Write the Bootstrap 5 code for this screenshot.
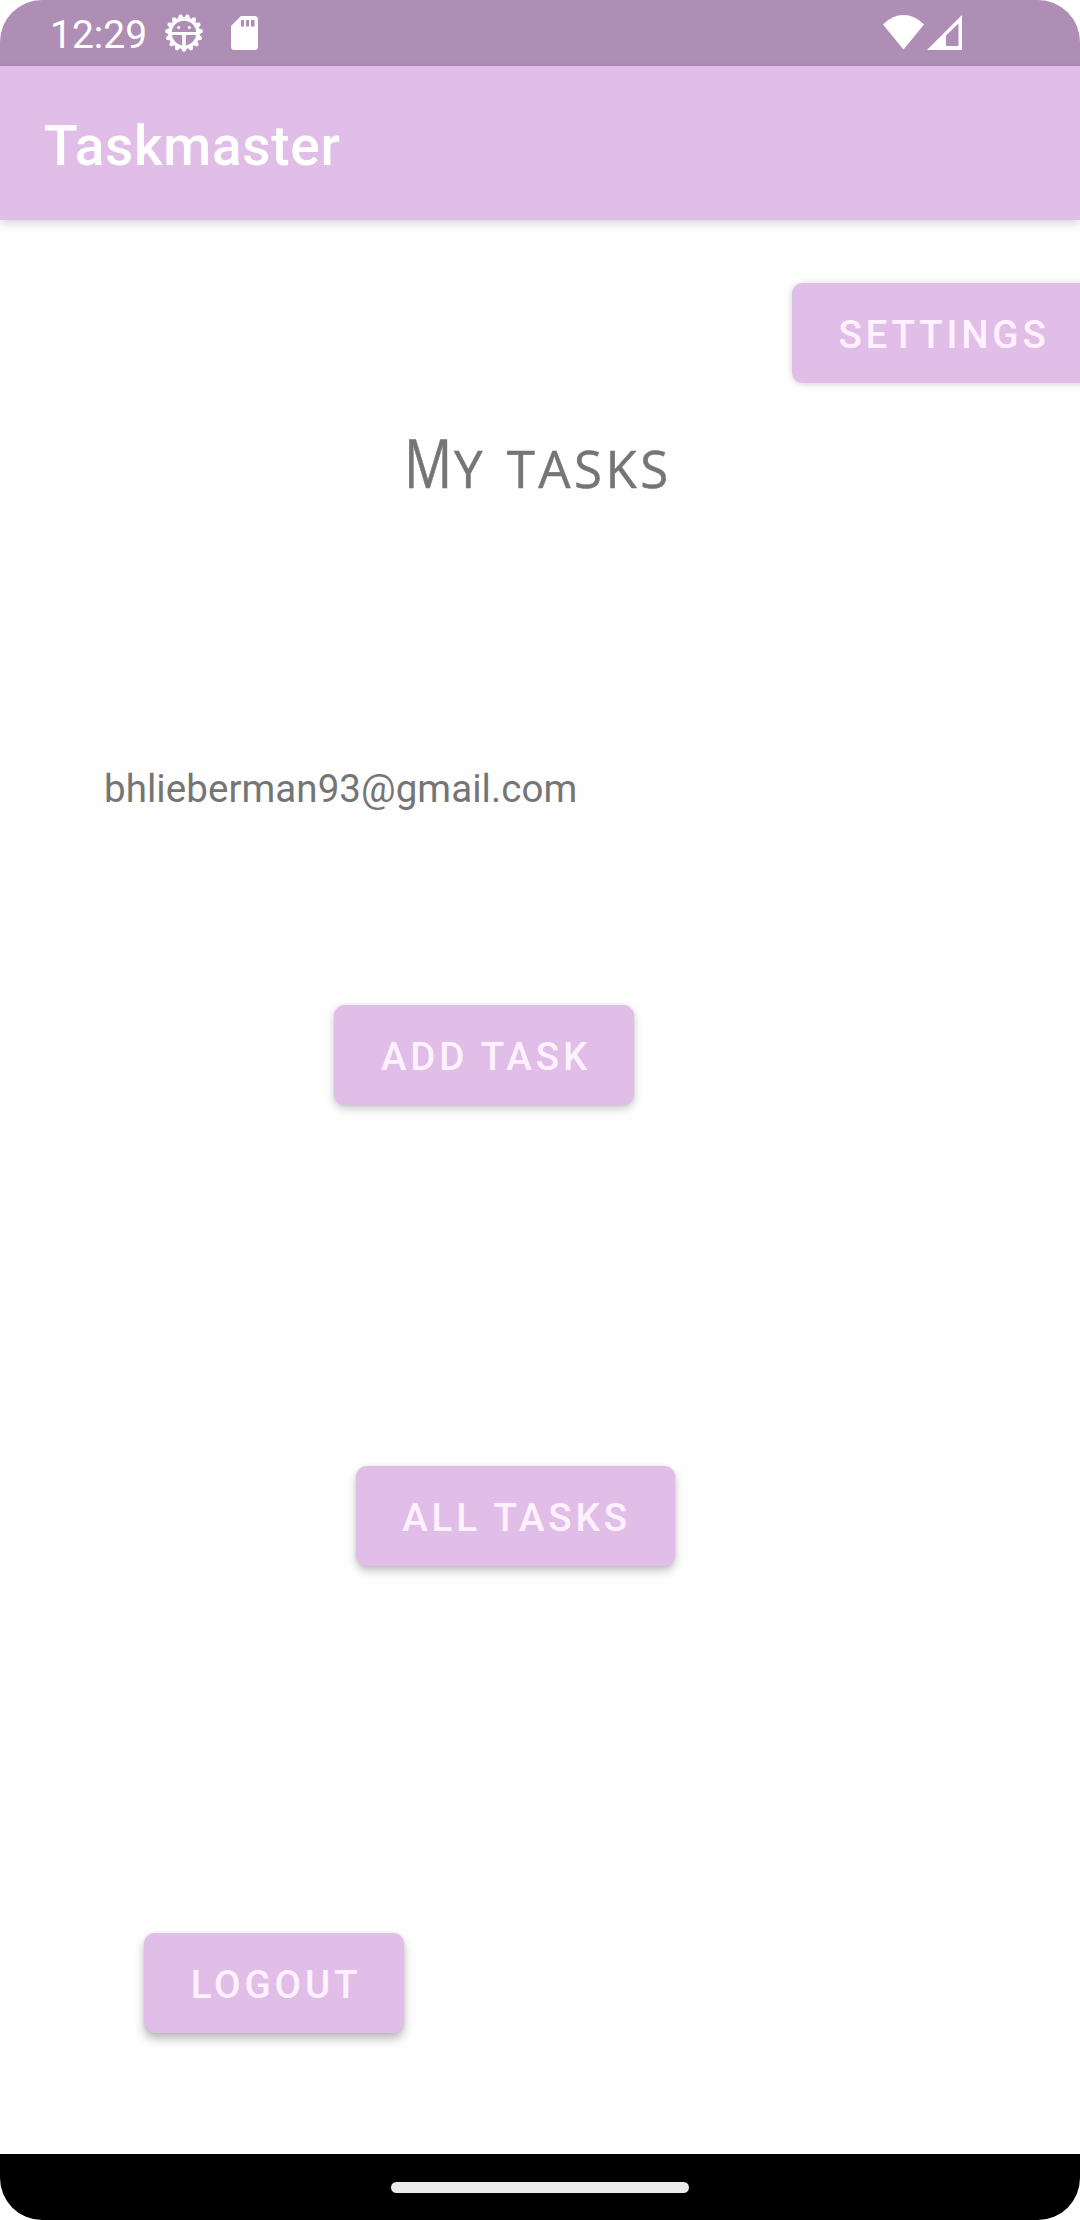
<!DOCTYPE html>
<html lang="en">
<head>
<meta charset="utf-8">
<meta name="viewport" content="width=device-width, initial-scale=1">
<title>Taskmaster</title>
<link href="https://cdn.jsdelivr.net/npm/bootstrap@5.3.0/dist/css/bootstrap.min.css" rel="stylesheet">
<style>
  body { font-family: Roboto, sans-serif; background: #fff; }
  .screen { width: 1080px; height: 2220px; border-radius: 42px; background: #fefefe; }
  .status-bar { height: 66px; background: #af8eb5; color: #fff; padding-left: 50px; padding-right: 117px; }
  .clock { font-size: 39px; line-height: 66px; width: 112px; padding-top: 3px; }
  .app-bar { height: 154px; background: #e1bee7; box-shadow: 0 3px 9px rgba(0,0,0,.17); padding: 0 44px; z-index: 1; }
  .app-title { font-size: 55px; font-weight: 500; line-height: 64px; letter-spacing: .69px; color: #fff; padding-top: 5px; }
  .btn-task { --bs-btn-color: #fff1ff; --bs-btn-bg: #e1bee7; --bs-btn-border-width: 0; --bs-btn-border-radius: 11px;
    --bs-btn-hover-color: #fff1ff; --bs-btn-hover-bg: #d8b2df; --bs-btn-padding-y: 0; --bs-btn-padding-x: 0;
    height: 100px; font-size: 38.5px; font-weight: 500; line-height: 45px; letter-spacing: 3.85px;
    padding: 3px 0 0 4px; box-shadow: 0 4px 8px rgba(0,0,0,.2), 0 0 3px rgba(0,0,0,.1); }
  .btn-settings { width: 303px; margin: 63px 0 0 792px; padding-right: 3px; box-shadow: 0 1px 6px rgba(0,0,0,.18); }
  .btn-add { width: 300px; margin: 193px 0 0 334px; }
  .btn-all { width: 319px; margin: 361px 0 0 356px; padding-left: 2px; box-shadow: 0 5px 9px rgba(0,0,0,.23), 0 0 3px rgba(0,0,0,.1); }
  .btn-logout { width: 260px; margin: 367px 0 0 144px; box-shadow: 0 6px 10px rgba(0,0,0,.26), 0 0 3px rgba(0,0,0,.1); }
  .heading-caps { font-family: "Open Sans", sans-serif; font-weight: 400; color: #757575; line-height: 80px; height: 80px; margin: 39px 0 0 404px; -webkit-text-stroke: .5px #757575; }
  .cap-big { font-size: 67px; display: inline-block; transform: scaleX(.8); transform-origin: left; width: 50px; }
  .cap-small { font-size: 51px; letter-spacing: 3.5px; word-spacing: 4px; }
  .email { font-size: 38.5px; line-height: 46px; letter-spacing: .06px; color: #757575; margin: 264px 0 0 104px; }
  .nav-strip { height: 66px; background: #000; }
  .nav-pill { width: 298px; height: 11px; border-radius: 6px; background: #ebebeb; }
</style>
</head>
<body>
<div class="screen d-flex flex-column overflow-hidden">
  <header class="status-bar d-flex align-items-center flex-shrink-0">
    <span class="clock">12:29</span>
    <svg width="44" height="44" viewBox="-22 -22 44 44" fill="none" stroke="#fff">
      <defs><path id="tooth" d="M-2.500 14.500 L-.8 18 H.8 L2.500 14.500Z" fill="#fff" stroke-width="1.500" stroke-linejoin="round"/></defs>
      <circle r="14" stroke-width="3.400"/>
      <g>
        <use href="#tooth"/><use href="#tooth" transform="rotate(24)"/><use href="#tooth" transform="rotate(48)"/>
        <use href="#tooth" transform="rotate(72)"/><use href="#tooth" transform="rotate(96)"/><use href="#tooth" transform="rotate(120)"/>
        <use href="#tooth" transform="rotate(144)"/><use href="#tooth" transform="rotate(168)"/><use href="#tooth" transform="rotate(192)"/>
        <use href="#tooth" transform="rotate(216)"/><use href="#tooth" transform="rotate(240)"/><use href="#tooth" transform="rotate(264)"/>
        <use href="#tooth" transform="rotate(288)"/><use href="#tooth" transform="rotate(312)"/><use href="#tooth" transform="rotate(336)"/>
      </g>
      <path d="M-14 .6H14" stroke-width="3"/><path d="M0 1V15" stroke-width="3.600"/>
      <circle cx="-5.300" cy="-5.600" r="1.500" fill="#fff" stroke="none"/><circle cx="5.300" cy="-5.600" r="1.500" fill="#fff" stroke="none"/>
    </svg>
    <svg class="ms-4" width="30" height="36" viewBox="0 0 30 36" fill="#fff"><path fill-rule="evenodd" d="M11 1H24.500Q28 1 28 4.500V31.500Q28 35 24.500 35H4.500Q1 35 1 31.500V11ZM11 5V11.500H14V5ZM16 5V11.500H19V5ZM21 5V11.500H24.500V5Z"/></svg>
    <svg class="ms-auto" width="80" height="36" viewBox="0 0 80 36" fill="#fff"><path d="M0 9.500Q9 0 20.500 0T41 9.500L20.500 34.500Z"/><path fill-rule="evenodd" d="M44 35L79 0V35ZM63 20.500V31H75.500V8.500Z"/></svg>
  </header>
  <nav class="app-bar d-flex align-items-center flex-shrink-0 position-relative"><span class="app-title">Taskmaster</span></nav>
  <main class="flex-grow-1 d-flex flex-column align-items-start">
    <button type="button" class="btn btn-task btn-settings text-uppercase flex-shrink-0">Settings</button>
    <h1 class="heading-caps text-nowrap"><span class="cap-big">M</span><span class="cap-small text-uppercase">y tasks</span></h1>
    <div class="email">bhlieberman93@gmail.com</div>
    <button type="button" class="btn btn-task btn-add text-uppercase">Add task</button>
    <button type="button" class="btn btn-task btn-all text-uppercase">All tasks</button>
    <button type="button" class="btn btn-task btn-logout text-uppercase">Logout</button>
  </main>
  <footer class="nav-strip d-flex align-items-center justify-content-center flex-shrink-0"><div class="nav-pill"></div></footer>
</div>
<script src="https://cdn.jsdelivr.net/npm/bootstrap@5.3.0/dist/js/bootstrap.bundle.min.js"></script>
</body>
</html>
